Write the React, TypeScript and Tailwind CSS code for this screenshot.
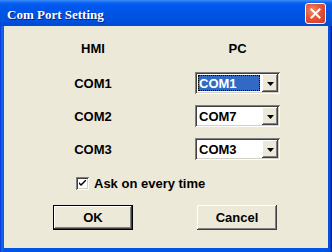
const ComboBox = ({ value, selected = false }: { value: string; selected?: boolean }) => {
	return (
		<div className="w-[85px] h-[22px] bg-white flex p-[2px] shadow-[inset_1px_1px_0_#808080,inset_-1px_-1px_0_#ffffff,inset_2px_2px_0_#404040,inset_-2px_-2px_0_#d4d0c8]">
			<div className="flex-1 flex items-center py-[1px] pl-[1px] pr-[2px]">
				<div
					className={`h-full flex-1 flex items-center pl-[1px] leading-none ${
						selected ? 'bg-[#316ac5] text-white outline-1 outline-dotted outline-black -outline-offset-1' : 'text-black'
					}`}
				>
					{value}
				</div>
			</div>
			<div className="w-[16px] h-full bg-[#ece9d8] flex items-center justify-center shadow-[inset_-1px_-1px_0_#404040,inset_1px_1px_0_#ffffff,inset_-2px_-2px_0_#808080]">
				<svg width="7" height="4" viewBox="0 0 7 4" className="mt-[1px]">
					<path d="M0 0h7L3.5 4z" fill="#000" />
				</svg>
			</div>
		</div>
	);
};

const Button = ({ label, isDefault = false }: { label: string; isDefault?: boolean }) => {
	return (
		<div className={`w-[80px] h-[25px] ${isDefault ? 'border border-black' : ''}`}>
			<div className="w-full h-full bg-[#ece9d8] flex items-center justify-center shadow-[inset_-1px_-1px_0_#404040,inset_1px_1px_0_#ffffff,inset_-2px_-2px_0_#808080]">
				{label}
			</div>
		</div>
	);
};

export default function App() {
	const rows = [
		{ hmi: 'COM1', pc: 'COM1', selected: true },
		{ hmi: 'COM2', pc: 'COM7' },
		{ hmi: 'COM3', pc: 'COM3' },
	];

	return (
		<div className="w-[332px] h-[252px] flex flex-col bg-[linear-gradient(to_right,#0831d9_0px,#166aee_2px,#0055e5_4px,#0055e5_328px,#0a49d2_330px,#00138c_332px)] pb-[4px] font-['Liberation_Sans',Arial,sans-serif] text-[13px] font-bold text-black select-none">
			{/* Title bar */}
			<div className="h-[26px] shrink-0 flex items-center justify-between pl-[7px] pr-[6px] bg-[linear-gradient(to_bottom,#3c8ef7_0px,#0a5ff0_3px,#0058ee_6px,#0054e3_14px,#0050dc_22px,#0048d0_26px)]">
				<span className="font-['Liberation_Serif',serif] text-[13px] font-bold text-white leading-none pt-[2px] [text-shadow:1px_1px_0_#0a1e8c]">
					Com Port Setting
				</span>
				<div className="w-[21px] h-[21px] mt-[1px] rounded-[3px] border border-white bg-[radial-gradient(circle_at_35%_35%,#f08a6c_0%,#e2553a_45%,#c73c20_100%)] flex items-center justify-center">
					<svg width="11" height="11" viewBox="0 0 11 11">
						<path d="M1.5 1.5l8 8M9.5 1.5l-8 8" stroke="#fff" strokeWidth="2" strokeLinecap="square" />
					</svg>
				</div>
			</div>

			{/* Client area */}
			<div className="flex-1 mx-[4px] bg-[#ece9d8] flex flex-col pt-[14px] pl-[49px]">
				<div className="grid grid-cols-[80px_85px] gap-x-[62px] h-[16px] items-center leading-none">
					<div className="text-center">HMI</div>
					<div className="text-center">PC</div>
				</div>

				<div className="grid grid-cols-[80px_85px] gap-x-[62px] gap-y-[11px] items-center mt-[16px]">
					{rows.map((r) => (
						<div key={r.hmi} className="contents">
							<div className="text-center leading-none">{r.hmi}</div>
							<ComboBox value={r.pc} selected={r.selected} />
						</div>
					))}
				</div>

				<div className="flex items-center gap-[5px] h-[16px] mt-[15px] ml-[23px]">
					<div className="w-[13px] h-[13px] bg-white flex items-center justify-center shadow-[inset_1px_1px_0_#808080,inset_-1px_-1px_0_#ffffff,inset_2px_2px_0_#404040,inset_-2px_-2px_0_#d4d0c8]">
						<svg width="7" height="7" viewBox="0 0 7 7">
							<path d="M0 2v2l2 2 5-5V-1L2 4z" fill="#000" />
						</svg>
					</div>
					<span className="leading-none">Ask on every time</span>
				</div>

				<div className="flex gap-[64px] mt-[14px]">
					<Button label="OK" isDefault />
					<Button label="Cancel" />
				</div>
			</div>
		</div>
	);
}
